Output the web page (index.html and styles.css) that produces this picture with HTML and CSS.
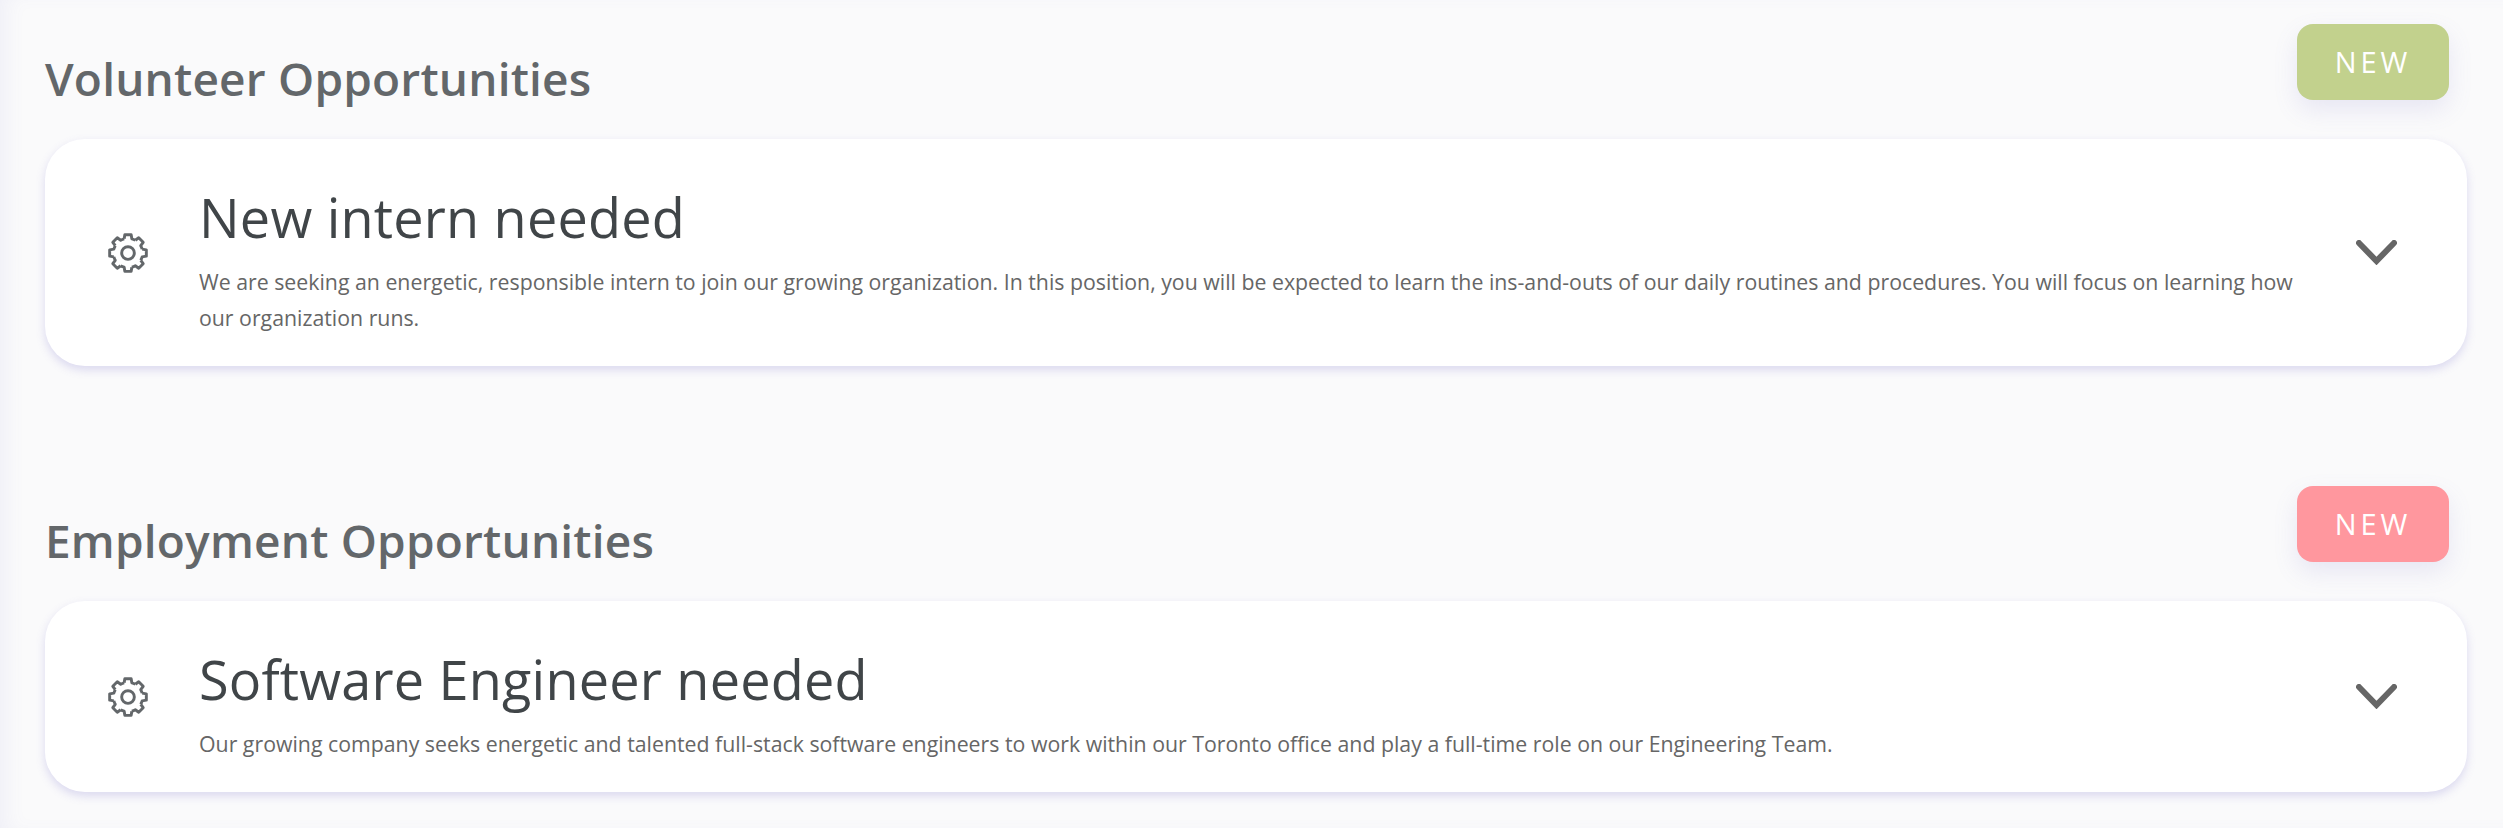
FILE: index.html
```html
<!DOCTYPE html>
<html lang="en">
<head>
    <meta charset="UTF-8">
    <title>Opportunities</title>
    <link rel="stylesheet" href="styles.css">
</head>
<body>
    <svg class="defs" width="0" height="0">
        <symbol id="gear" viewBox="-12 -12 24 24">
            <g id="tooth-set">
                <path id="tooth" d="M-2.3 -8.5 L-1.9 -11 H1.9 L2.3 -8.5 Q3.4 -8.2 4.4 -7.6"/>
                <use href="#tooth" transform="rotate(45)"/>
                <use href="#tooth" transform="rotate(90)"/>
                <use href="#tooth" transform="rotate(135)"/>
                <use href="#tooth" transform="rotate(180)"/>
                <use href="#tooth" transform="rotate(225)"/>
                <use href="#tooth" transform="rotate(270)"/>
                <use href="#tooth" transform="rotate(315)"/>
            </g>
            <circle r="3.8"/>
        </symbol>
    </svg>

    <section class="group">
        <span class="badge badge-green">NEW</span>
        <h2>Volunteer Opportunities</h2>
        <div class="card">
            <svg class="gear"><use href="#gear"/></svg>
            <div class="card-text">
                <h3>New intern needed</h3>
                <p>We are seeking an energetic, responsible intern to join our growing organization. In this position, you will be expected to learn the ins-and-outs of our daily routines and procedures. You will focus on learning how our organization runs.</p>
            </div>
            <svg class="chevron" viewBox="0 0 41 25"><path d="M3 3 L20.5 21 L38 3"/></svg>
        </div>
    </section>

    <section class="group">
        <span class="badge badge-red">NEW</span>
        <h2>Employment Opportunities</h2>
        <div class="card">
            <svg class="gear"><use href="#gear"/></svg>
            <div class="card-text">
                <h3>Software Engineer needed</h3>
                <p>Our growing company seeks energetic and talented full-stack software engineers to work within our Toronto office and play a full-time role on our Engineering Team.</p>
            </div>
            <svg class="chevron" viewBox="0 0 41 25"><path d="M3 3 L20.5 21 L38 3"/></svg>
        </div>
    </section>
</body>
</html>
```

FILE: styles.css
```css
body {
    margin: 0;
    padding: 0 36px 36px 45px;
    background-color: #fafafb;
    box-shadow: inset 14px 0 20px -8px rgba(120, 110, 200, 0.08);
    font-family: 'Open Sans', sans-serif;
}
.defs {
    position: absolute;
}
.group {
    position: relative;
    padding-top: 49px;
}
.group + .group {
    margin-top: 96px;
}
h2 {
    margin: 0 0 32px;
    font-size: 46px;
    line-height: 58px;
    font-weight: 600;
    color: #63676a;
    letter-spacing: 0.2px;
}
.badge {
    position: absolute;
    top: 24px;
    right: 18px;
    width: 152px;
    height: 76px;
    line-height: 76px;
    text-align: center;
    border-radius: 16px;
    color: #fff;
    font-size: 29px;
    letter-spacing: 4px;
    box-shadow: 0 10px 24px rgba(120, 110, 200, 0.14);
}
.badge-green {
    background-color: #c2d18d;
}
.badge-red {
    background-color: #ff979e;
}
.card {
    display: flex;
    align-items: center;
    padding: 48px 70px 30px 63px;
    background: white;
    border-radius: 40px;
    box-shadow: 0 4px 10px rgba(110, 100, 200, 0.22);
}
.gear {
    flex: none;
    width: 40px;
    height: 40px;
    margin-top: -18px;
    margin-right: 51px;
    fill: none;
    stroke: #63676a;
    stroke-width: 1.75;
    stroke-linejoin: round;
}
.card-text {
    flex: 1;
}
h3 {
    margin: 0 0 17px;
    font-size: 54px;
    line-height: 60px;
    font-weight: 400;
    color: #404548;
    letter-spacing: 0.2px;
}
p {
    margin: 0;
    font-size: 21.3px;
    line-height: 36px;
    color: #666;
}
.chevron {
    flex: none;
    width: 41px;
    height: 25px;
    margin-top: -18px;
    margin-left: 40px;
    fill: none;
    stroke: #666;
    stroke-width: 6;
    stroke-linecap: round;
}
```
